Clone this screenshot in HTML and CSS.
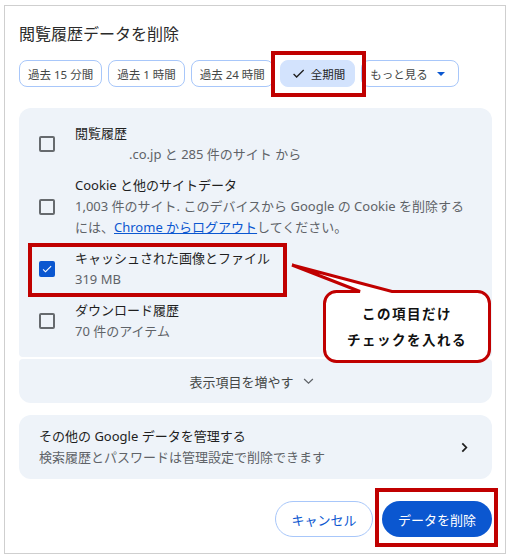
FILE: index.html
```html
<!DOCTYPE html>
<html lang="ja">
<head>
<meta charset="utf-8">
<title>閲覧履歴データを削除</title>
<link rel="stylesheet" href="styles.css">
</head>
<body>
<div class="page">
  <div class="dialog">
    <h1 class="title">閲覧履歴データを削除</h1>
    <div class="chips">
      <span class="chip">過去 15 分間</span>
      <span class="chip">過去 1 時間</span>
      <span class="chip">過去 24 時間</span>
      <span class="chip selected"><svg class="chip-check" viewBox="0 0 24 24" width="15" height="15"><path d="M9 16.17L4.83 12l-1.42 1.41L9 19 21 7l-1.41-1.41z" fill="#1f1f1f"/></svg>全期間</span>
      <span class="chip">もっと見る<svg class="caret" viewBox="0 0 8 4" width="8" height="4"><path d="M0 0h8L4 4z" fill="#0b57d0"/></svg></span>
    </div>

    <div class="group">
      <div class="list">
        <div class="row">
          <span class="cb"></span>
          <div class="text">
            <div class="label">閲覧履歴</div>
            <div class="sub"><span class="redacted"></span>.co.jp と 285 件のサイト から</div>
          </div>
        </div>
        <div class="row">
          <span class="cb"></span>
          <div class="text">
            <div class="label">Cookie と他のサイトデータ</div>
            <div class="sub">1,003 件のサイト. このデバイスから Google の Cookie を削除する<br>には、<a class="link" href="#">Chrome からログアウト</a>してください。</div>
          </div>
        </div>
        <div class="row">
          <span class="cb checked"><svg viewBox="0 0 24 24" width="14" height="14"><path d="M9 16.17L4.83 12l-1.42 1.41L9 19 21 7l-1.41-1.41z" fill="#fff"/></svg></span>
          <div class="text">
            <div class="label">キャッシュされた画像とファイル</div>
            <div class="sub">319 MB</div>
          </div>
        </div>
        <div class="row">
          <span class="cb"></span>
          <div class="text">
            <div class="label">ダウンロード履歴</div>
            <div class="sub">70 件のアイテム</div>
          </div>
        </div>
      </div>
      <div class="more">表示項目を増やす<svg class="more-chev" viewBox="0 0 12 8" width="11" height="7"><path d="M1 1.2l5 4.8 5-4.8" fill="none" stroke="#5f6368" stroke-width="1.4"/></svg></div>
    </div>

    <div class="manage">
      <div class="text">
        <div class="label">その他の Google データを管理する</div>
        <div class="sub">検索履歴とパスワードは管理設定で削除できます</div>
      </div>
      <svg class="manage-chev" viewBox="0 0 8 12" width="7" height="11"><path d="M1.5 1.2l4.6 4.8-4.6 4.8" fill="none" stroke="#1f1f1f" stroke-width="2"/></svg>
    </div>

    <div class="actions">
      <span class="btn btn-outline">キャンセル</span>
      <span class="btn btn-filled">データを削除</span>
    </div>
  </div>

  <div class="mark mark-chip"></div>
  <div class="mark mark-row"></div>
  <div class="mark mark-btn"></div>

  <svg class="callout-shape" viewBox="0 0 510 560" width="510" height="560">
    <path d="M336.5 291.5 L360 291.5 L292 265 L392 291.5 L477.5 291.5 A12 12 0 0 1 489.5 303.5 L489.5 349.5 A12 12 0 0 1 477.5 361.5 L336.5 361.5 A12 12 0 0 1 324.5 349.5 L324.5 303.5 A12 12 0 0 1 336.5 291.5 Z" fill="#fff" stroke="#c00000" stroke-width="3" stroke-linejoin="miter"/>
  </svg>
  <div class="callout-text">この項目だけ<br>チェックを入れる</div>
</div>
</body>
</html>
```

FILE: styles.css
```css
* {
  box-sizing: border-box;
}

html, body {
  margin: 0;
  padding: 0;
  background: #ffffff;
}

body {
  font-family: "Noto Sans", "Noto Sans CJK JP", sans-serif;
  color: #1f1f1f;
}

.page {
  position: relative;
  width: 510px;
  height: 560px;
  padding: 5px 0 0 4px;
}

.dialog {
  width: 502px;
  height: 549px;
  border: 1px solid #cfcfcf;
  padding: 16px 13px 0 14px;
  display: flex;
  flex-direction: column;
}

.title {
  margin: 0;
  font-size: 16px;
  line-height: 24px;
  font-weight: 400;
  color: #2b2b2b;
}

.chips {
  margin-top: 14px;
  display: flex;
  gap: 6px;
}

.chip {
  height: 27px;
  display: inline-flex;
  align-items: center;
  padding: 0 8px;
  border: 1px solid #a8c7fa;
  border-radius: 8px;
  font-size: 11.5px;
  color: #444746;
  white-space: nowrap;
}

.chip.selected {
  background: #d3e3fd;
  border-color: #d3e3fd;
  padding: 0 9px 0 10px;
  color: #1f1f1f;
}

.chip-check {
  margin-right: 5px;
}

.caret {
  margin-left: 9px;
  margin-right: 5px;
}

.group {
  margin-top: 21px;
  display: flex;
  flex-direction: column;
  gap: 2px;
}

.list {
  background: #eef3f9;
  border-radius: 12px 12px 4px 4px;
  padding: 10px 0;
}

.row {
  display: flex;
  align-items: center;
  padding: 5px 20px;
}

.cb {
  flex: none;
  width: 16px;
  height: 16px;
  border: 2px solid #666a6e;
  border-radius: 2px;
  margin-right: 20px;
  display: flex;
  align-items: center;
  justify-content: center;
}

.cb.checked {
  background: #0b57d0;
  border-color: #0b57d0;
}

.text {
  flex: 1;
  min-width: 0;
}

.label {
  font-size: 13px;
  line-height: 21px;
  color: #1f1f1f;
  white-space: nowrap;
}

.sub {
  font-size: 13px;
  line-height: 21px;
  color: #5f6368;
  white-space: nowrap;
}

.redacted {
  display: inline-block;
  width: 54px;
}

.link {
  color: #0b57d0;
  text-decoration: underline;
}

.more {
  height: 44px;
  background: #eef3f9;
  border-radius: 4px 4px 12px 12px;
  display: flex;
  align-items: center;
  justify-content: center;
  font-size: 13px;
  color: #444746;
  padding-right: 8px;
}

.more-chev {
  margin-left: 9px;
}

.manage {
  margin-top: 12px;
  background: #eef3f9;
  border-radius: 12px;
  padding: 11px 24px 11px 20px;
  display: flex;
  align-items: center;
}

.actions {
  margin-top: 22px;
  display: flex;
  justify-content: flex-end;
  gap: 9px;
}

.btn {
  height: 36px;
  border-radius: 18px;
  display: inline-flex;
  align-items: center;
  justify-content: center;
  font-size: 13px;
  white-space: nowrap;
}

.btn-outline {
  width: 98px;
  border: 1px solid #a8c7fa;
  color: #0b57d0;
}

.btn-filled {
  width: 110px;
  background: #0b57d0;
  color: #ffffff;
}

.mark {
  position: absolute;
  border: 4px solid #c00000;
}

.mark-chip {
  left: 271px;
  top: 51px;
  width: 95px;
  height: 46px;
}

.mark-row {
  left: 28px;
  top: 243px;
  width: 259px;
  height: 54px;
}

.mark-btn {
  left: 375px;
  top: 488px;
  width: 123px;
  height: 59px;
}

.callout-shape {
  position: absolute;
  left: 0;
  top: 0;
  pointer-events: none;
}

.callout-text {
  position: absolute;
  left: 323px;
  top: 290px;
  width: 168px;
  height: 72px;
  display: flex;
  align-items: center;
  justify-content: center;
  text-align: center;
  font-family: "Noto Sans CJK JP", sans-serif;
  font-weight: 700;
  font-size: 13.5px;
  letter-spacing: 1.5px;
  line-height: 26px;
  color: #111111;
}
```
